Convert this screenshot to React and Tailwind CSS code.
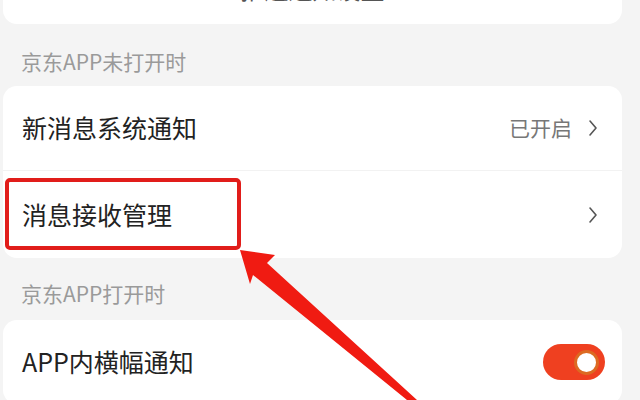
import React from 'react';

const font = { fontFamily: '"Noto Sans CJK SC", "Noto Sans", sans-serif' };

const Chevron = () => (
  <svg width="10" height="18" viewBox="0 0 10 18" className="shrink-0">
    <polyline points="2,2 8,9 2,16" fill="none" stroke="#555" strokeWidth="1.6" strokeLinecap="round" strokeLinejoin="round" />
  </svg>
);

const Toggle = () => (
  <div className="w-[62px] h-[36px] rounded-full bg-[#ef4020] flex items-center justify-end pr-[6px]">
    <div className="w-[25px] h-[25px] rounded-full bg-white border-[3px] border-[#dc6a22]"></div>
  </div>
);

const App = () => {
  return (
    <div className="relative w-[640px] h-[400px] overflow-hidden bg-[#f4f4f4]" style={font}>
      {/* top card, cut off */}
      <div className="ml-[3px] w-[619px] h-[24px] bg-white rounded-b-[14px] overflow-hidden flex justify-center">
        <span className="text-[24px] leading-[24px] text-[#555] -mt-[23px]">推送通知设置</span>
      </div>

      <div className="pl-[21px] pt-[14px] h-[62px] flex items-center text-[21px] text-[#9a9a9a]">京东APP未打开时</div>

      <div className="ml-[3px] w-[619px] bg-white rounded-[14px]">
        <div className="h-[85px] flex items-center justify-between pl-[19px] pr-[24px] border-b border-[#f2f2f2]">
          <span className="text-[25px] text-[#222]">新消息系统通知</span>
          <div className="flex items-center gap-[16px]">
            <span className="text-[21px] text-[#777]">已开启</span>
            <Chevron />
          </div>
        </div>
        <div className="h-[87px] flex items-center justify-between pl-[19px] pr-[24px]">
          <span className="text-[25px] text-[#222]">消息接收管理</span>
          <Chevron />
        </div>
      </div>

      <div className="pl-[21px] pt-[10px] h-[62px] flex items-center text-[21px] text-[#9a9a9a]">京东APP打开时</div>

      <div className="ml-[3px] w-[619px] bg-white rounded-[14px]">
        <div className="h-[84px] flex items-center justify-between pl-[19px] pr-[17px]">
          <span className="text-[25px] text-[#222]">APP内横幅通知</span>
          <Toggle />
        </div>
      </div>

      {/* red highlight box */}
      <div className="absolute left-[5px] top-[178px] w-[236px] h-[72px] border-[4px] border-[#e11d1a] rounded-[5px]"></div>

      {/* red arrow */}
      <svg className="absolute inset-0 pointer-events-none" width="640" height="400" viewBox="0 0 640 400">
        <polygon
          points="240,250 275,255 267,263 417,400 407,400 253,275 250,284"
          fill="#f01b12"
        />
      </svg>
    </div>
  );
};

export default App;
